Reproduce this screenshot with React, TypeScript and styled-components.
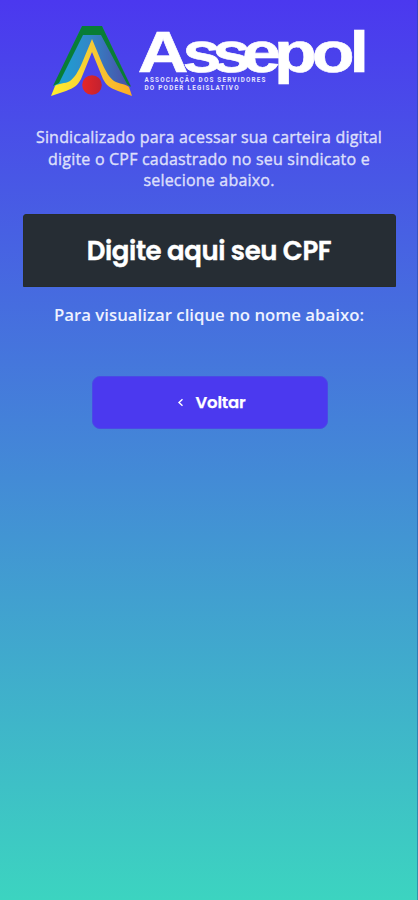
import React from "react";
import styled, { createGlobalStyle } from "styled-components";

const GlobalStyle = createGlobalStyle`
  * { box-sizing: border-box; }
  body { margin: 0; }
`;

const Screen = styled.main`
  display: flex;
  flex-direction: column;
  align-items: center;
  width: 100%;
  height: 900px;
  padding: 22px 22px 0 23px;
  background: linear-gradient(180deg, #4b38ef 0%, #3cd4c0 100%);
  border-right: 1px solid rgba(30, 70, 150, 0.45);
  font-family: "Open Sans", sans-serif;
  overflow: hidden;
`;

const Logo = styled.svg`
  display: block;
  width: 320px;
  height: 78px;
  margin-right: 2px;
  flex: none;
  overflow: visible;
`;

const Intro = styled.p`
  margin: 27px 0 0;
  color: #dcdffb;
  font-size: 16px;
  letter-spacing: 0.2px;
  -webkit-text-stroke: 0.4px #dcdffb;
  line-height: 21.6px;
  text-align: center;
  white-space: nowrap;
`;

const CpfInput = styled.input`
  width: 373px;
  height: 73px;
  margin-top: 22px;
  padding: 2px 0 0;
  flex: none;
  border: 1px solid #262c2b;
  border-radius: 3px 3px 0 0;
  outline: none;
  background: #262d34;
  color: #fff;
  font: 600 26px "Poppins", sans-serif;
  letter-spacing: -0.4px;
  -webkit-text-stroke: 0.4px #fff;
  text-align: center;
  &::placeholder { color: #fff; opacity: 1; }
`;

const Hint = styled.p`
  margin: 17px 0 0;
  color: #eef2ff;
  font-size: 16.8px;
  font-weight: 600;
  line-height: 22px;
  white-space: nowrap;
`;

const BackButton = styled.button`
  display: flex;
  align-items: center;
  justify-content: center;
  gap: 12px;
  width: 236px;
  height: 53px;
  margin: 50px 0 0 1px;
  padding: 0 0 0 3px;
  flex: none;
  border: 1px solid #4a4ae5;
  border-radius: 8px;
  background: #4b39ef;
  color: #fff;
  font: 600 16.5px "Poppins", sans-serif;
  -webkit-text-stroke: 0.25px #fff;
  letter-spacing: -0.2px;
`;

const Chevron = styled.svg`
  width: 7px;
  height: 9px;
`;

function AssepolLogo() {
  return (
    <Logo viewBox="48 22 320 78" role="img" aria-label="Assepol">
      <defs>
        <linearGradient id="blade" x1="0" x2="1">
          <stop offset="0" stopColor="#18a4d5" />
          <stop offset="0.45" stopColor="#3188c8" />
          <stop offset="1" stopColor="#4c4ba5" />
        </linearGradient>
        <linearGradient id="ribbon" x1="0" x2="1">
          <stop offset="0" stopColor="#fff02d" />
          <stop offset="0.5" stopColor="#f5cb36" />
          <stop offset="1" stopColor="#ffac25" />
        </linearGradient>
        <linearGradient id="sun" x1="0" x2="1">
          <stop offset="0" stopColor="#e52727" />
          <stop offset="1" stopColor="#c32130" />
        </linearGradient>
      </defs>
      <path d="M82 26H102L131 86L118 86L105 75L92 46L79 75L66 86H54Z" fill="url(#blade)" />
      <path d="M82 26H102L131 87L127 84L101 35H83L59 83L53 86Z" fill="#087d36" />
      <path d="M92 39L102 63C106 72 109 77 114 81C119 84 126 84 129 87L132 96L118 91C110 88 106 85 103 79L92 52L81 79C78 85 74 88 66 91L51 96L55 86C58 83 65 84 70 81C75 77 78 72 82 63Z" fill="url(#ribbon)" />
      <circle cx="92" cy="85" r="9.8" fill="url(#sun)" />
      <text
        transform="translate(0 71.6) scale(1.23 1)"
        x="112.1 148.3 172.6 196.8 222.7 253.5 284.1"
        y="0"
        fill="#fff"
        stroke="#fff"
        strokeWidth="0.6"
        fontFamily="Liberation Sans"
        fontWeight="700"
        fontSize="57"
      >
        Assepol
      </text>
      <g fill="#e6e5ff" fontFamily="Roboto" fontWeight="700" fontSize="6.3">
        <text x="144.5" y="82" textLength="121" lengthAdjust="spacing">ASSOCIAÇÃO DOS SERVIDORES</text>
        <text x="144.5" y="89.7" textLength="94" lengthAdjust="spacing">DO PODER LEGISLATIVO</text>
      </g>
    </Logo>
  );
}

export default function App() {
  return (
    <>
      <GlobalStyle />
      <Screen>
        <AssepolLogo />
        <Intro>
          Sindicalizado para acessar sua carteira digital
          <br />
          digite o CPF cadastrado no seu sindicato e
          <br />
          selecione abaixo.
        </Intro>
        <CpfInput placeholder="Digite aqui seu CPF" aria-label="CPF" />
        <Hint>Para visualizar clique no nome abaixo:</Hint>
        <BackButton type="button">
          <Chevron viewBox="0 0 7 9" aria-hidden="true">
            <path d="M5.5 1.2L2 4.5L5.5 7.8" fill="none" stroke="#fff" strokeWidth="1.4" />
          </Chevron>
          Voltar
        </BackButton>
      </Screen>
    </>
  );
}
